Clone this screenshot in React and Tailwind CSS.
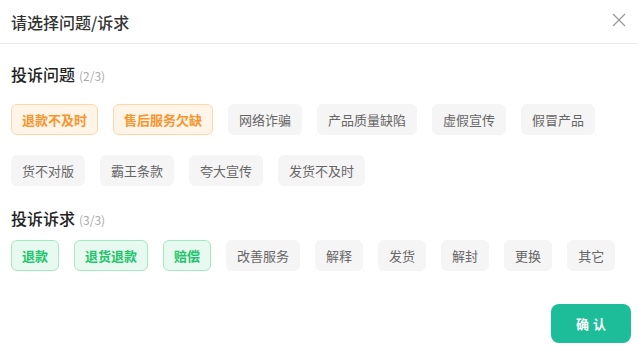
const issues = [
  { label: '退款不及时', on: true },
  { label: '售后服务欠缺', on: true },
  { label: '网络诈骗' },
  { label: '产品质量缺陷' },
  { label: '虚假宣传' },
  { label: '假冒产品' },
  { label: '货不对版' },
  { label: '霸王条款' },
  { label: '夸大宣传' },
  { label: '发货不及时' },
];

const demands = [
  { label: '退款', on: true },
  { label: '退货退款', on: true },
  { label: '赔偿', on: true },
  { label: '改善服务' },
  { label: '解释' },
  { label: '发货' },
  { label: '解封' },
  { label: '更换' },
  { label: '其它' },
];

function Tag({ label, on, tone }) {
  const active =
    tone === 'orange'
      ? 'bg-[#fff4e8] border-[#ffd6aa] text-[#f7952f] font-bold'
      : 'bg-[#e8f9ef] border-[#a3e9c2] text-[#1fc46c] font-bold';
  return (
    <span
      className={
        'h-[31px] px-[10px] flex items-center rounded-[6px] border text-[13px] ' +
        (on ? active : 'bg-[#f5f5f5] border-[#f5f5f5] text-[#666]')
      }
    >
      {label}
    </span>
  );
}

export default function App() {
  return (
    <div
      className="w-[638px] h-[349px] bg-white text-[#222] flex flex-col"
      style={{ fontFamily: '"Noto Sans CJK SC", "Noto Sans", sans-serif' }}
    >
      <div className="h-[44px] shrink-0 flex items-center justify-between pl-[11px] pr-[12px] border-b border-[#ebebeb]">
        <h2 className="text-[16px] font-medium leading-6 text-[#333]">请选择问题/诉求</h2>
        <svg width="14" height="14" viewBox="0 0 14 14" className="-mt-[4px]">
          <path d="M1 1L13 13M13 1L1 13" stroke="#999" strokeWidth="1.2" />
        </svg>
      </div>

      <div className="px-[11px] pt-[18px]">
        <div className="flex items-baseline gap-[4px] leading-6">
          <span className="text-[16px] font-medium">投诉问题</span>
          <span className="text-[12px] text-[#aaa]">(2/3)</span>
        </div>
        <div className="mt-[16px] flex flex-wrap gap-x-[15px] gap-y-[20px]">
          {issues.map((t) => (
            <Tag key={t.label} {...t} tone="orange" />
          ))}
        </div>

        <div className="mt-[20px] flex items-baseline gap-[4px] leading-6">
          <span className="text-[16px] font-medium">投诉诉求</span>
          <span className="text-[12px] text-[#aaa]">(3/3)</span>
        </div>
        <div className="mt-[8px] flex flex-wrap gap-x-[15px] gap-y-[20px]">
          {demands.map((t) => (
            <Tag key={t.label} {...t} tone="green" />
          ))}
        </div>
      </div>

      <div className="flex justify-end pr-[7px] mt-[33px]">
        <button className="w-[80px] h-[39px] rounded-[8px] bg-[#1dbd9a] text-white text-[13px] font-bold tracking-[4px] pl-[4px]">
          确认
        </button>
      </div>
    </div>
  );
}
